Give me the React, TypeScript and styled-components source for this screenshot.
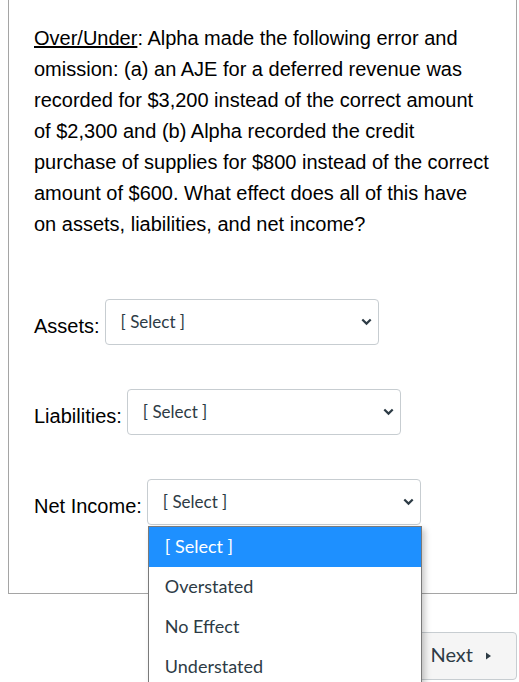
import React from 'react';
import styled, { createGlobalStyle } from 'styled-components';

const GlobalStyle = createGlobalStyle`
  html, body {
    margin: 0;
    padding: 0;
    background: #ffffff;
    overflow: hidden;
  }
  body {
    font-family: 'Liberation Sans', Arial, sans-serif;
  }
`;

const Page = styled.div`
  width: 519px;
  height: 682px;
  padding-left: 8px;
  box-sizing: border-box;
  overflow: hidden;
`;

const QuestionBox = styled.div`
  width: 509px;
  box-sizing: border-box;
  border: 1px solid #a5a5a5;
  border-top: 0;
  padding: 23px 23px 68px 25px;
  display: flex;
  flex-direction: column;
`;

const QuestionText = styled.p`
  margin: 0;
  font-size: 20px;
  line-height: 31px;
  color: #000000;
`;

const Underlined = styled.span`
  text-decoration: underline;
`;

const Fields = styled.div`
  display: flex;
  flex-direction: column;
  gap: 44px;
  margin-top: 59px;
`;

const FieldRow = styled.div`
  display: flex;
  align-items: center;
  gap: 5px;
`;

const Label = styled.span`
  font-size: 20px;
  color: #000000;
  padding-top: 9px;
`;

const SelectWrap = styled.div`
  position: relative;
`;

const SelectBox = styled.div`
  width: 274px;
  height: 46px;
  box-sizing: border-box;
  border: 1px solid #c7cdd1;
  border-radius: 4px;
  background: #ffffff;
  display: flex;
  align-items: center;
  justify-content: space-between;
  padding: 0 6px 2px 15px;
  font-family: Lato, 'Liberation Sans', sans-serif;
  font-size: 17px;
  color: #2d3b45;
`;

const Chevron = styled.svg`
  width: 11px;
  height: 8px;
  margin-top: 2px;
`;

const OptionList = styled.ul`
  position: absolute;
  top: calc(100% + 1px);
  left: 1px;
  width: 274px;
  margin: 0;
  padding: 0;
  list-style: none;
  background: #ffffff;
  border: 1px solid #7a7a7a;
  box-sizing: border-box;
  box-shadow: 3px 3px 6px rgba(0, 0, 0, 0.22);
  z-index: 2;
`;

const OptionItem = styled.li<{ $active?: boolean }>`
  height: 40px;
  box-sizing: border-box;
  display: flex;
  align-items: center;
  padding: 0 0 3px 16px;
  font-family: Lato, 'Liberation Sans', sans-serif;
  font-size: 18px;
  color: ${(p) => (p.$active ? '#ffffff' : '#2d3b45')};
  background: ${(p) => (p.$active ? '#1e90ff' : '#ffffff')};
`;

const Footer = styled.div`
  display: flex;
  justify-content: flex-end;
  width: 509px;
  padding-top: 38px;
`;

const NextButton = styled.button`
  height: 48px;
  box-sizing: border-box;
  border: 1px solid #c7cdd1;
  border-radius: 4px;
  background: #f5f5f5;
  color: #2d3b45;
  font-family: Lato, 'Liberation Sans', sans-serif;
  font-size: 20px;
  padding: 0 24px 4px 20px;
  display: flex;
  align-items: center;
  gap: 12px;
`;

const Caret = styled.svg`
  width: 7px;
  height: 10px;
  margin-top: 3px;
`;

const options = ['[ Select ]', 'Overstated', 'No Effect', 'Understated'];

const ChevronDown = () => (
  <Chevron viewBox="0 0 11 8">
    <path d="M1.3 1.5 L5.5 5.6 L9.7 1.5" fill="none" stroke="#2d3b45" strokeWidth="2.2" />
  </Chevron>
);

const Field = ({ label, open }: { label: string; open?: boolean }) => (
  <FieldRow>
    <Label>{label}</Label>
    <SelectWrap>
      <SelectBox>
        <span>[ Select ]</span>
        <ChevronDown />
      </SelectBox>
      {open && (
        <OptionList>
          {options.map((o, i) => (
            <OptionItem key={o} $active={i === 0}>
              {o}
            </OptionItem>
          ))}
        </OptionList>
      )}
    </SelectWrap>
  </FieldRow>
);

const App = () => {
  return (
    <Page>
      <GlobalStyle />
      <QuestionBox>
        <QuestionText>
          <Underlined>Over/Under</Underlined>: Alpha made the following error and
          omission: (a) an AJE for a deferred revenue was recorded for $3,200
          instead of the correct amount of $2,300 and (b) Alpha recorded the
          credit purchase of supplies for $800 instead of the correct amount of
          $600. What effect does all of this have on assets, liabilities, and
          net income?
        </QuestionText>
        <Fields>
          <Field label="Assets:" />
          <Field label="Liabilities:" />
          <Field label="Net Income:" open />
        </Fields>
      </QuestionBox>
      <Footer>
        <NextButton>
          Next
          <Caret viewBox="0 0 7 10">
            <path d="M1 1.5 L6 5 L1 8.5 Z" fill="#2d3b45" />
          </Caret>
        </NextButton>
      </Footer>
    </Page>
  );
};

export default App;
